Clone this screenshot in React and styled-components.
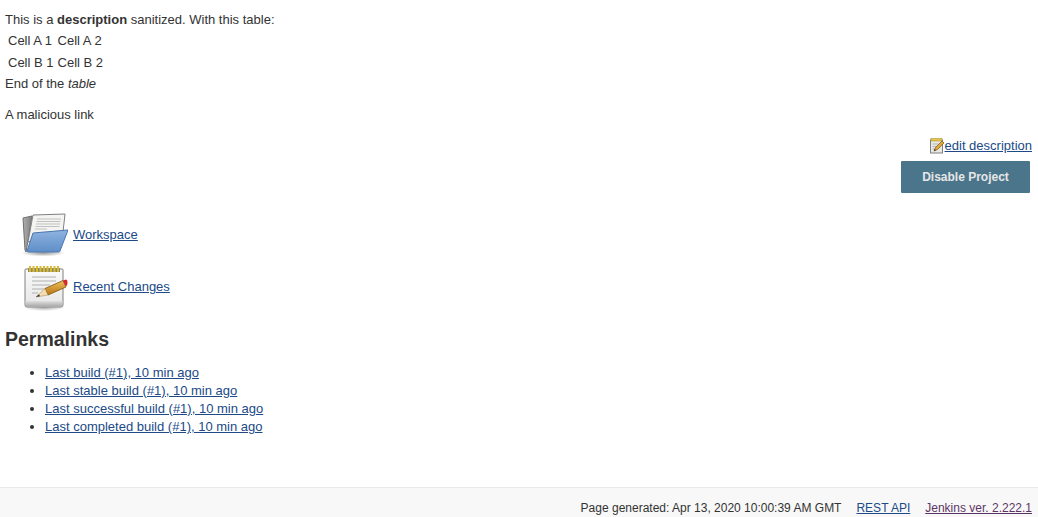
import React from "react";
import styled, { createGlobalStyle } from "styled-components";

const Global = createGlobalStyle`
  html, body { margin: 0; padding: 0; background: #fff; }
  body {
    font-family: "Liberation Sans", Arial, sans-serif;
    font-size: 13px;
    line-height: 18px;
    color: #333;
  }
`;

const Page = styled.div`
  height: 517px;
  display: flex;
  flex-direction: column;
  overflow: hidden;
`;
const Main = styled.div`
  flex: 1;
  padding: 11px 6px 0 5px;
`;
const Description = styled.div`
  height: 126px;
`;
const Line = styled.div`
  height: ${p => p.$h || 18}px;
  line-height: 18px;
`;
const CellTable = styled.table`
  border-collapse: separate;
  border-spacing: 2px;
  margin: 0;
`;
const Cell = styled.td`
  padding: 1px;
  line-height: 18px;
`;
const Link = styled.a`
  color: ${p => (p.$visited ? "#5c3566" : "#204a87")};
  text-decoration: underline;
`;
const EditRow = styled.div`
  display: flex;
  justify-content: flex-end;
  align-items: center;
  height: 18px;
`;
const ButtonRow = styled.div`
  display: flex;
  justify-content: flex-end;
  padding: 6px 2px 0 0;
`;
const Button = styled.button`
  width: 129px;
  height: 32px;
  border: none;
  border-radius: 1px;
  background: #4b758b;
  color: #e6e6e6;
  font: bold 12px "Liberation Sans", Arial, sans-serif;
  padding: 0;
`;
const Tasks = styled.div`
  margin-top: 18px;
  padding-left: 15px;
  display: flex;
  flex-direction: column;
  gap: 4px;
`;
const Task = styled.div`
  display: flex;
  align-items: center;
  height: 48px;
  gap: 5px;
`;
const Heading = styled.h2`
  margin: 14px 0 0;
  font-size: 19.5px;
  line-height: 28px;
  font-weight: bold;
  color: #333;
`;
const Links = styled.ul`
  margin: 11px 0 0;
  padding: 0 0 0 40px;
`;
const Item = styled.li`
  line-height: 18px;
`;
const Footer = styled.footer`
  height: 29px;
  flex: none;
  background: #f8f8f8;
  border-top: 1px solid #e9e9e9;
  display: flex;
  justify-content: flex-end;
  align-items: flex-end;
  gap: 15px;
  padding: 0 6px 0 0;
  font-size: 12px;
`;

const NoteIcon = () => (
  <svg width="16" height="16" viewBox="0 0 16 16">
    <rect x="1.5" y="2" width="12" height="13" fill="#e8e8e4" stroke="#808080" />
    <rect x="2" y="0.5" width="11" height="2.5" fill="#e3c64a" stroke="#a08a2a" strokeWidth=".5" />
    <path d="M3.5 6h6M3.5 8.5h4M3.5 11h3" stroke="#b5b5b5" />
    <path d="M5 13l1.500-3.500 6.500-6.500 2 2-6.500 6.500z" fill="#e2a83a" stroke="#7a5510" strokeWidth=".7" />
    <path d="M5 13l.8-2 1.200 1.200z" fill="#3a3a3a" />
  </svg>
);

const FolderIcon = () => (
  <svg width="48" height="48" viewBox="0 0 48 48">
    <defs>
      <linearGradient id="fb" x1="0" y1="0" x2="0" y2="1">
        <stop offset="0" stopColor="#8fb4df" />
        <stop offset="1" stopColor="#5f8ec9" />
      </linearGradient>
      <linearGradient id="fg" x1="0" y1="0" x2="1" y2="0">
        <stop offset="0" stopColor="#b0b0b0" />
        <stop offset="1" stopColor="#808080" />
      </linearGradient>
      <radialGradient id="fs">
        <stop offset="0" stopColor="#000" stopOpacity=".4" />
        <stop offset="1" stopColor="#000" stopOpacity="0" />
      </radialGradient>
    </defs>
    <ellipse cx="23" cy="42" rx="22" ry="3.5" fill="url(#fs)" />
    <path d="M3 7l9-2-4 25-2 11-1-2z" fill="url(#fg)" stroke="#707070" />
    <path d="M13 4l32-1-2 18-35 10z" fill="#f4f4f2" stroke="#808080" />
    <path d="M17 8h24M16.500 10.500h24M16 13h24M15.500 15.500h24M15 18h12" stroke="#c0c0c0" />
    <path d="M13 22l35-3-8 21q0 1-2 1H8q-1 0-1-1z" fill="url(#fb)" stroke="#4a76ae" />
  </svg>
);

const NotepadIcon = () => (
  <svg width="48" height="48" viewBox="0 0 48 48">
    <defs>
      <linearGradient id="np" x1="0" y1="0" x2="0" y2="1">
        <stop offset="0" stopColor="#fafafa" />
        <stop offset="1" stopColor="#e6e6e6" />
      </linearGradient>
      <linearGradient id="bd" x1="0" y1="0" x2="0" y2="1">
        <stop offset="0" stopColor="#e0e0e0" />
        <stop offset="1" stopColor="#a8a8a8" />
      </linearGradient>
      <linearGradient id="pc" x1="0" y1="0" x2="0" y2="1">
        <stop offset="0" stopColor="#f0c060" />
        <stop offset="1" stopColor="#b9740f" />
      </linearGradient>
      <radialGradient id="ns">
        <stop offset="0" stopColor="#000" stopOpacity=".3" />
        <stop offset="1" stopColor="#000" stopOpacity="0" />
      </radialGradient>
    </defs>
    <ellipse cx="24" cy="45" rx="20" ry="3" fill="url(#ns)" />
    <path d="M6 6h36q1 0 1 1v35q0 2-2 2H7q-2 0-2-2V7q0-1 1-1z" fill="url(#np)" stroke="#808080" />
    <path d="M5.500 38h37v4q0 1.500-1.500 1.500H7q-1.500 0-1.500-1.500z" fill="url(#bd)" />
    <path d="M12 14h24M12 18h24M12 22h18M12 26h12M12 30h6" stroke="#b0b0b0" />
    <path d="M8 5h32v4H8z" fill="#8a8a6a" />
    <path d="M10 3v6M13.500 3v6M17 3v6M20.500 3v6M24 3v6M27.500 3v6M31 3v6M34.500 3v6M38 3v6" stroke="#d9b92e" strokeWidth="2" />
    <path d="M25 25.500l18-8 3 6.500-18 8z" fill="url(#pc)" stroke="#7a5510" strokeWidth=".8" />
    <path d="M16 34l9-8.500 3 6.500z" fill="#f3dcb0" stroke="#8a6a2a" strokeWidth=".4" />
    <path d="M16 34l3-2.800 1 2z" fill="#333" />
    <path d="M43 17.500l3-1q1.500 0 1.500 2.800t-1 3.500l-.6.500z" fill="#d9252a" />
  </svg>
);

const builds = [
  "Last build (#1), 10 min ago",
  "Last stable build (#1), 10 min ago",
  "Last successful build (#1), 10 min ago",
  "Last completed build (#1), 10 min ago",
];

export default function App() {
  return (
    <Page>
      <Global />
      <Main>
        <Description>
          <Line>
            This is a <b>description</b> sanitized. With this table:
          </Line>
          <CellTable>
            <tbody>
              <tr>
                <Cell>Cell A 1</Cell>
                <Cell>Cell A 2</Cell>
              </tr>
              <tr>
                <Cell>Cell B 1</Cell>
                <Cell>Cell B 2</Cell>
              </tr>
            </tbody>
          </CellTable>
          <Line $h={31}>
            End of the <i>table</i>
          </Line>
          <Line>A malicious link</Line>
        </Description>
        <EditRow>
          <NoteIcon />
          <Link href="#">edit description</Link>
        </EditRow>
        <ButtonRow>
          <Button>Disable Project</Button>
        </ButtonRow>
        <Tasks>
          <Task>
            <FolderIcon />
            <Link href="#">Workspace</Link>
          </Task>
          <Task>
            <NotepadIcon />
            <Link href="#">Recent Changes</Link>
          </Task>
        </Tasks>
        <Heading>Permalinks</Heading>
        <Links>
          {builds.map(b => (
            <Item key={b}>
              <Link href="#">{b}</Link>
            </Item>
          ))}
        </Links>
      </Main>
      <Footer>
        <span>Page generated: Apr 13, 2020 10:00:39 AM GMT</span>
        <Link href="#">REST API</Link>
        <Link href="#" $visited>Jenkins ver. 2.222.1</Link>
      </Footer>
    </Page>
  );
}
